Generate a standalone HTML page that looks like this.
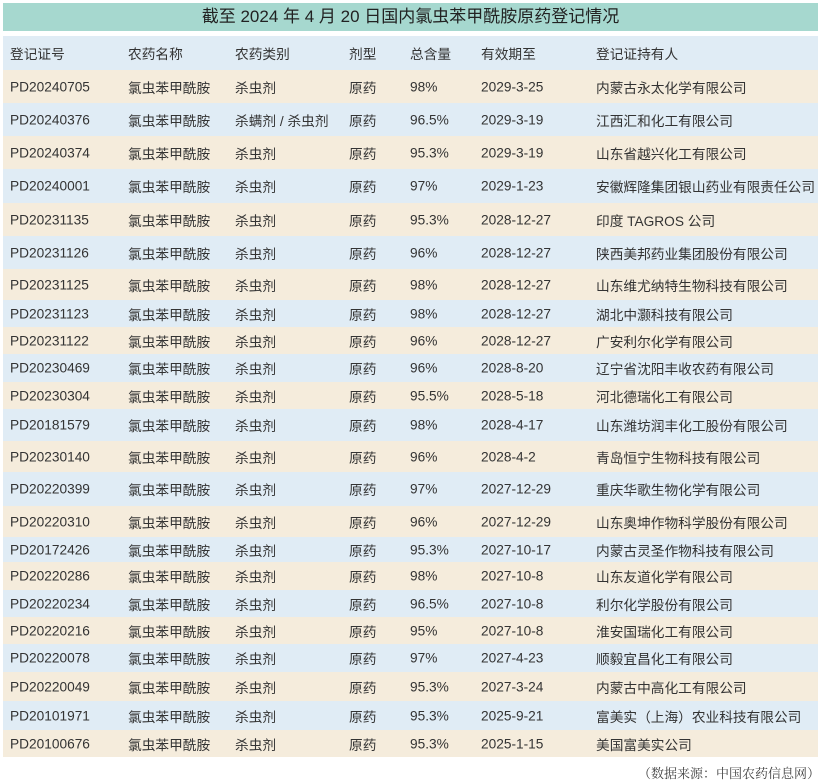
<!DOCTYPE html>
<html><head><meta charset="utf-8"><style>
body{margin:0;width:830px;height:784px;background:#fff;font-family:"Liberation Sans","Noto Sans CJK SC",sans-serif;color:#333;position:relative;overflow:hidden}
.t{position:absolute;left:3px;top:3px;width:815px;height:28px;background:#a6d8cf;font-size:17px;line-height:28px;text-align:center;color:#222}
.r{position:absolute;left:3px;width:815px;font-size:13.7px}
.r span{position:absolute;top:50%;transform:translateY(-50%);white-space:nowrap}
.b{background:#e0ecf5}.y{background:#f5ecdc}
.src{position:absolute;right:10px;top:763px;font-size:13px;color:#444;font-family:"Liberation Serif","Noto Serif CJK SC",serif}
</style></head><body>
<div class="t">截至 2024 年 4 月 20 日国内氯虫苯甲酰胺原药登记情况</div>
<div id="tb"></div>
<div class="src">（数据来源：中国农药信息网）</div>
<script>
var ys=[36,70,103,136,169,203,236,269,300,327,354,382,409,441,472,506,537,562,590,617,644,672,701,730,757];
var xs=[7,125,232,346,407,478,593];
var rows=[["登记证号","农药名称","农药类别","剂型","总含量","有效期至","登记证持有人"],
["PD20240705","氯虫苯甲酰胺","杀虫剂","原药","98%","2029-3-25","内蒙古永太化学有限公司"],
["PD20240376","氯虫苯甲酰胺","杀螨剂 / 杀虫剂","原药","96.5%","2029-3-19","江西汇和化工有限公司"],
["PD20240374","氯虫苯甲酰胺","杀虫剂","原药","95.3%","2029-3-19","山东省越兴化工有限公司"],
["PD20240001","氯虫苯甲酰胺","杀虫剂","原药","97%","2029-1-23","安徽辉隆集团银山药业有限责任公司"],
["PD20231135","氯虫苯甲酰胺","杀虫剂","原药","95.3%","2028-12-27","印度 TAGROS 公司"],
["PD20231126","氯虫苯甲酰胺","杀虫剂","原药","96%","2028-12-27","陕西美邦药业集团股份有限公司"],
["PD20231125","氯虫苯甲酰胺","杀虫剂","原药","98%","2028-12-27","山东维尤纳特生物科技有限公司"],
["PD20231123","氯虫苯甲酰胺","杀虫剂","原药","98%","2028-12-27","湖北中灏科技有限公司"],
["PD20231122","氯虫苯甲酰胺","杀虫剂","原药","96%","2028-12-27","广安利尔化学有限公司"],
["PD20230469","氯虫苯甲酰胺","杀虫剂","原药","96%","2028-8-20","辽宁省沈阳丰收农药有限公司"],
["PD20230304","氯虫苯甲酰胺","杀虫剂","原药","95.5%","2028-5-18","河北德瑞化工有限公司"],
["PD20181579","氯虫苯甲酰胺","杀虫剂","原药","98%","2028-4-17","山东潍坊润丰化工股份有限公司"],
["PD20230140","氯虫苯甲酰胺","杀虫剂","原药","96%","2028-4-2","青岛恒宁生物科技有限公司"],
["PD20220399","氯虫苯甲酰胺","杀虫剂","原药","97%","2027-12-29","重庆华歌生物化学有限公司"],
["PD20220310","氯虫苯甲酰胺","杀虫剂","原药","96%","2027-12-29","山东奥坤作物科学股份有限公司"],
["PD20172426","氯虫苯甲酰胺","杀虫剂","原药","95.3%","2027-10-17","内蒙古灵圣作物科技有限公司"],
["PD20220286","氯虫苯甲酰胺","杀虫剂","原药","98%","2027-10-8","山东友道化学有限公司"],
["PD20220234","氯虫苯甲酰胺","杀虫剂","原药","96.5%","2027-10-8","利尔化学股份有限公司"],
["PD20220216","氯虫苯甲酰胺","杀虫剂","原药","95%","2027-10-8","淮安国瑞化工有限公司"],
["PD20220078","氯虫苯甲酰胺","杀虫剂","原药","97%","2027-4-23","顺毅宜昌化工有限公司"],
["PD20220049","氯虫苯甲酰胺","杀虫剂","原药","95.3%","2027-3-24","内蒙古中高化工有限公司"],
["PD20101971","氯虫苯甲酰胺","杀虫剂","原药","95.3%","2025-9-21","富美实（上海）农业科技有限公司"],
["PD20100676","氯虫苯甲酰胺","杀虫剂","原药","95.3%","2025-1-15","美国富美实公司"]];
var h="";
for(var i=0;i<rows.length;i++){
 var cls=(i%2==0)?"b":"y";
 h+='<div class="r '+cls+'" style="top:'+ys[i]+'px;height:'+(ys[i+1]-ys[i])+'px">';
 for(var j=0;j<7;j++)h+='<span style="left:'+xs[j]+'px">'+rows[i][j]+'</span>';
 h+='</div>';
}
document.getElementById("tb").innerHTML=h;
</script>
</body></html>
